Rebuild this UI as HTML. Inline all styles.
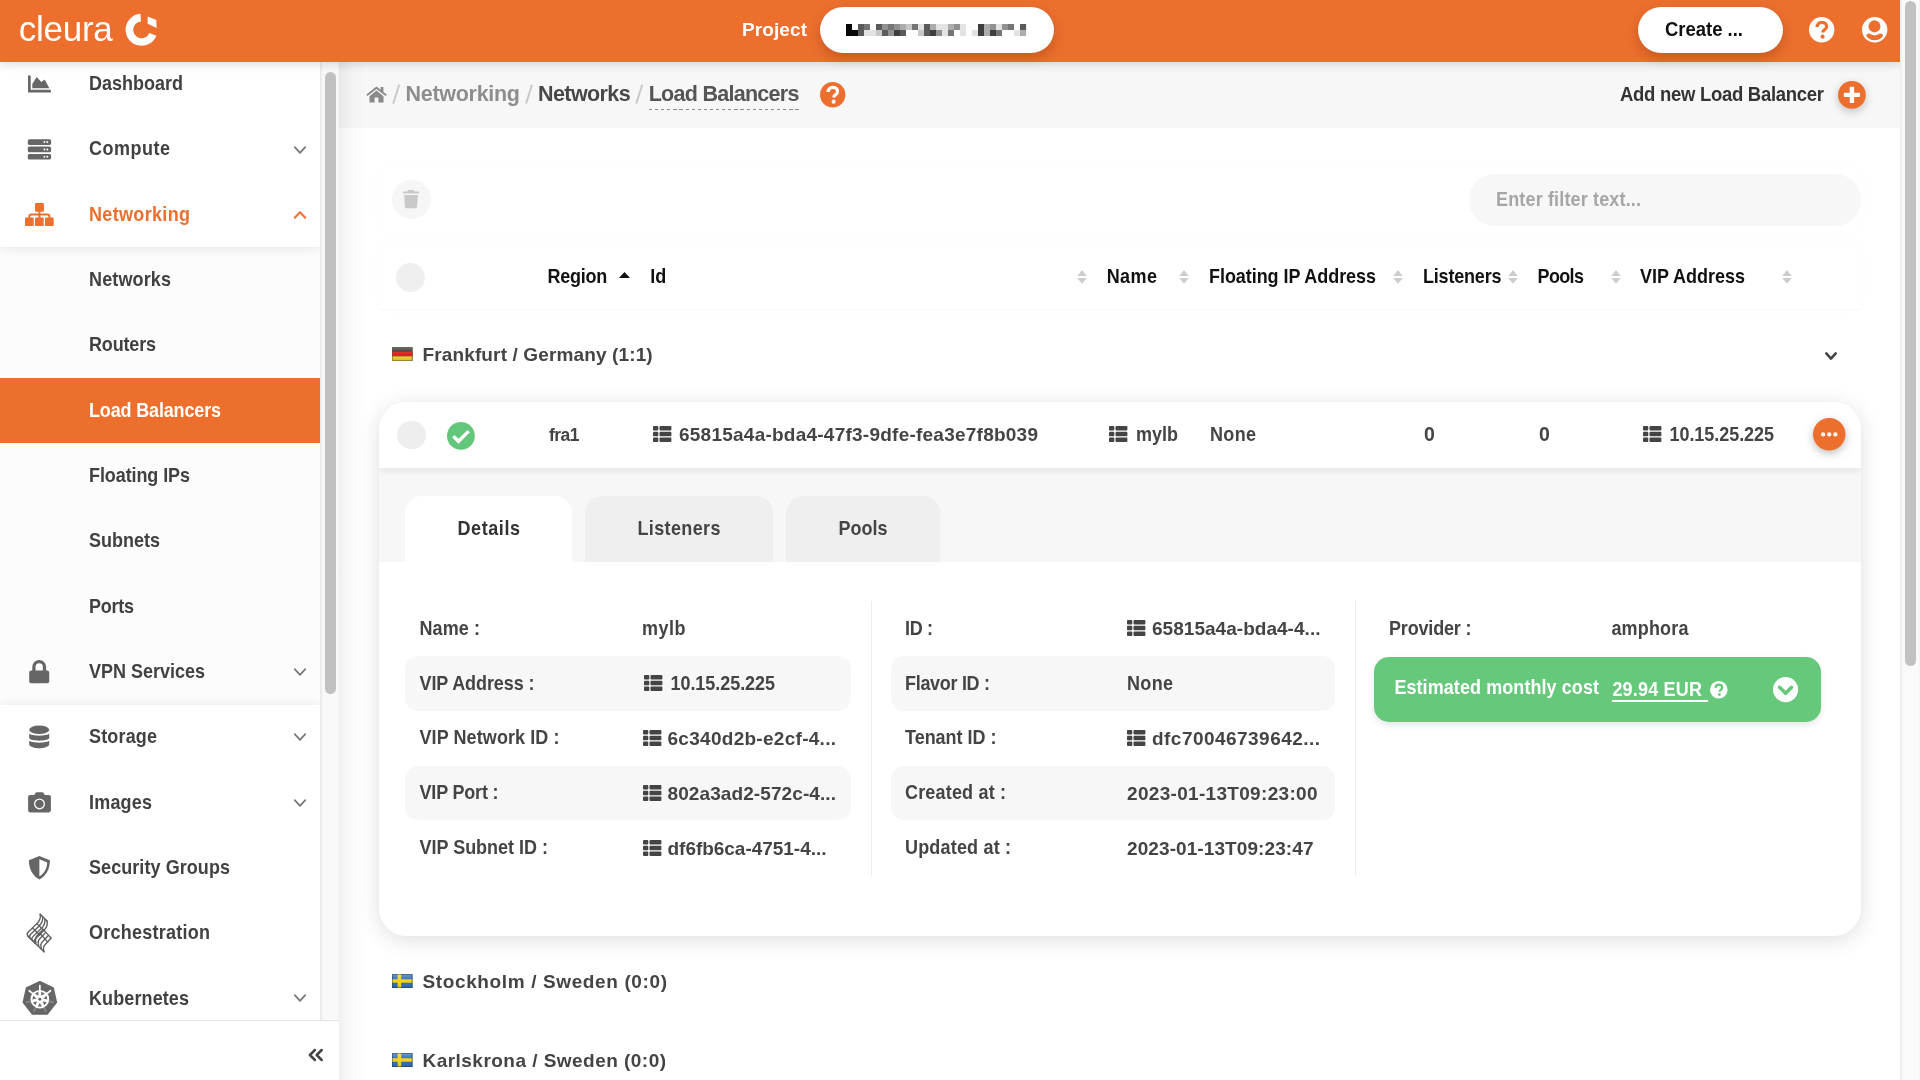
<!DOCTYPE html>
<html lang="en">
<head>
<meta charset="utf-8">
<title>Cleura - Load Balancers</title>
<style>
*{box-sizing:border-box;margin:0;padding:0}
html,body{width:1920px;height:1080px;overflow:hidden;background:#fff}
body{font-family:"Liberation Sans",sans-serif;color:#444;position:relative;font-weight:bold}
.t{position:absolute;white-space:nowrap;line-height:1}
svg{position:absolute;overflow:visible}
.a{position:absolute}
#hdr{position:absolute;left:0;top:0;width:1900px;height:62px;background:#ec6f2e;box-shadow:0 2px 10px rgba(0,0,0,.15);z-index:20}
.pill{position:absolute;top:7px;height:46px;border-radius:23px;background:#fff;box-shadow:0 5px 12px rgba(110,40,0,.30)}
#psb{position:absolute;left:1900px;top:0;width:20px;height:1080px;background:linear-gradient(90deg,#e9e9e9 0,#f3f3f3 1.5px,#fafafa 3.5px,#fafafa 18.5px,#f1f1f1 20px);z-index:30}
#psb i{position:absolute;left:5.1px;top:1px;width:11px;height:665px;border-radius:6px;background:#c1c1c1}
#side{position:absolute;left:0;top:62px;width:320px;height:958px;background:#fcfcfc;overflow:hidden;z-index:5}
#sidetop{position:absolute;left:0;top:-10px;width:320px;height:195px;background:#fff;box-shadow:0 3px 9px rgba(0,0,0,.07)}
#sidebot{position:absolute;left:0;top:642.7px;width:320px;height:330px;background:#fff;box-shadow:0 -3px 8px rgba(0,0,0,.05)}
#sideact{position:absolute;left:0;top:316px;width:320px;height:65px;background:#ec6f2e}
#ssb{position:absolute;left:320px;top:62px;width:19px;height:958px;background:linear-gradient(90deg,#e4e4e4 0,#f1f1f1 1.5px,#f9f9f9 3.5px,#fafafa 17.5px,#f0f0f0 19px);z-index:6}
#ssb i{position:absolute;left:5.3px;top:10px;width:10.4px;height:622.2px;border-radius:6px;background:#c1c1c1}
#sfoot{position:absolute;left:0;top:1020px;width:339px;height:60px;background:#fff;border-top:1px solid #e4e4e4;z-index:7}
#main{position:absolute;left:0;top:0;width:1900px;height:1080px;z-index:1;overflow:hidden}
#mshadow{position:absolute;left:339px;top:62px;width:26px;height:1018px;background:linear-gradient(90deg,rgba(0,0,0,.06),rgba(0,0,0,.018) 45%,rgba(0,0,0,0));z-index:9;pointer-events:none}
#bc{position:absolute;left:339px;top:62px;width:1561px;height:65.5px;background:#f7f7f7}
.circ{position:absolute;border-radius:50%}
.t,svg{will-change:auto}
#main,#side,#hdr,#sfoot{will-change:transform}
</style>
</head>
<body>
<div id="main"><div id="bc"></div>
<svg style="left:366.3px;top:85.6px;" width="21" height="16.6" viewBox="0 0 21 16.6"><path d="M10.5 0.4 L0.3 8.6 L1.5 10.1 L10.5 2.9 L19.5 10.1 L20.7 8.6 L17.4 5.9 L17.4 0.9 L14.6 0.9 L14.6 3.7 Z" fill="#8a8a8a"/><path d="M10.5 4.6 L3.5 10.3 L3.5 16.5 L8.6 16.5 L8.6 11.6 L12.4 11.6 L12.4 16.5 L17.5 16.5 L17.5 10.3 Z" fill="#8a8a8a"/></svg>
<svg style="left:0px;top:0px;" width="1" height="1" viewBox="0 0 1 1"><line x1="393.2" y1="103.6" x2="399.2" y2="84.8" stroke="#c8c8c8" stroke-width="1.9"/></svg>
<svg style="left:0px;top:0px;" width="1" height="1" viewBox="0 0 1 1"><line x1="526" y1="103.6" x2="532" y2="84.8" stroke="#c8c8c8" stroke-width="1.9"/></svg>
<svg style="left:0px;top:0px;" width="1" height="1" viewBox="0 0 1 1"><line x1="636.2" y1="103.6" x2="642.2" y2="84.8" stroke="#c8c8c8" stroke-width="1.9"/></svg>
<span class="t" id="t19" style="left:405.5px;top:84px;font-size:21.5px;color:#8e8e8e;letter-spacing:-0.286px;">Networking</span>
<span class="t" id="t20" style="left:538px;top:84px;font-size:21.5px;color:#484848;letter-spacing:-0.585px;">Networks</span>
<span class="t" id="t21" style="left:648.7px;top:84px;font-size:21.5px;color:#555;letter-spacing:-0.725px;">Load Balancers</span>
<div class="a" style="left:648.5px;top:109px;width:151px;height:1.4px;background:repeating-linear-gradient(90deg,#8c8c8c 0,#8c8c8c 3.2px,transparent 3.2px,transparent 6.1px)"></div>
<svg style="left:819.7px;top:82.2px;" width="25.4" height="25.4" viewBox="0 0 25.4 25.4"><g transform="scale(0.976923)"><circle cx="13" cy="13" r="13" fill="#ec6f2e"/><path d="M8.3 10.3 C8.3 7.2 10.4 5.5 13.2 5.5 C16 5.5 18 7.2 18 9.7 C18 11.8 16.7 12.7 15.5 13.5 C14.5 14.2 14.2 14.7 14.2 15.9" fill="none" stroke="#fff" stroke-width="3.3" stroke-linecap="butt"/><circle cx="13.9" cy="20.1" r="2.1" fill="#fff"/></g></svg>
<span class="t" id="t22" style="left:1620px;top:86px;font-size:18.5px;color:#333;letter-spacing:-0.286px;transform:scaleY(1.085);transform-origin:0 15px;">Add new Load Balancer</span>
<svg style="left:1838.3px;top:81.4px;filter:drop-shadow(0 3px 4px rgba(0,0,0,.22));" width="27.8" height="27.8" viewBox="0 0 27.8 27.8"><circle cx="13.9" cy="13.9" r="13.9" fill="#ec6f2e"/><rect x="5.8" y="11.7" width="16.2" height="4.4" rx="0.8" fill="#fff"/><rect x="11.7" y="5.8" width="4.4" height="16.2" rx="0.8" fill="#fff"/></svg>
<div class="a" style="left:379px;top:167px;width:1482px;height:65px;background:#fff;box-shadow:0 0 14px rgba(0,0,0,.014)"></div>
<div class="a" style="left:379px;top:245px;width:1482px;height:64px;background:#fff;box-shadow:0 0 14px rgba(0,0,0,.014)"></div>
<div class="circ" style="left:392px;top:180.3px;width:38.8px;height:38.8px;background:#f6f6f6"></div>
<svg style="left:403.4px;top:190px;" width="16" height="18.3" viewBox="0 0 16 18.3"><path d="M0 1.6 L4.6 1.6 L5.3 0.3 C5.4 0.1 5.6 0 5.8 0 L10.2 0 C10.4 0 10.6 0.1 10.7 0.3 L11.4 1.6 L16 1.6 L16 3.6 L0 3.6 Z" fill="#c9c9c9"/><path d="M1.1 5 L14.9 5 L14.1 16.8 C14 17.7 13.3 18.3 12.5 18.3 L3.5 18.3 C2.7 18.3 2 17.7 1.9 16.8 Z" fill="#c9c9c9"/></svg>
<div class="a" style="left:1469px;top:174px;width:392px;height:51.5px;border-radius:26px;background:#f7f7f7"></div>
<span class="t" id="t23" style="left:1496px;top:191px;font-size:18px;color:#a6a6a6;letter-spacing:0.156px;transform:scaleY(1.085);transform-origin:0 15px;">Enter filter text...</span>
<div class="a" style="left:379px;top:309px;width:1482px;height:1px;background:#f8f8f8"></div>
<div class="circ" style="left:396px;top:262.8px;width:29px;height:29px;background:#efefef"></div>
<span class="t" id="t24" style="left:547.5px;top:268px;font-size:18px;color:#111;letter-spacing:-0.240px;transform:scaleY(1.085);transform-origin:0 15px;">Region</span>
<svg style="left:619px;top:272.3px;" width="11" height="6" viewBox="0 0 11 6"><polygon points="0,6 5.5,0 11,6" fill="#111"/></svg>
<span class="t" id="t25" style="left:650.3px;top:268px;font-size:18px;color:#111;transform:scaleY(1.085);transform-origin:0 15px;">Id</span>
<span class="t" id="t26" style="left:1106.7px;top:268px;font-size:18px;color:#111;letter-spacing:0.423px;transform:scaleY(1.085);transform-origin:0 15px;">Name</span>
<span class="t" id="t27" style="left:1209px;top:268px;font-size:18px;color:#111;letter-spacing:-0.057px;transform:scaleY(1.085);transform-origin:0 15px;">Floating IP Address</span>
<span class="t" id="t28" style="left:1423px;top:268px;font-size:18px;color:#111;letter-spacing:-0.193px;transform:scaleY(1.085);transform-origin:0 15px;">Listeners</span>
<span class="t" id="t29" style="left:1537.5px;top:268px;font-size:18px;color:#111;letter-spacing:-0.629px;transform:scaleY(1.085);transform-origin:0 15px;">Pools</span>
<span class="t" id="t30" style="left:1640px;top:268px;font-size:18px;color:#111;letter-spacing:-0.005px;transform:scaleY(1.085);transform-origin:0 15px;">VIP Address</span>
<svg style="left:1081.5px;top:0px;" width="1" height="1" viewBox="0 0 1 1"><polygon points="-4.8,276 0,270 4.8,276" fill="#cdcdcd"/><polygon points="-4.8,277.9 0,283.7 4.8,277.9" fill="#cdcdcd"/></svg>
<svg style="left:1184px;top:0px;" width="1" height="1" viewBox="0 0 1 1"><polygon points="-4.8,276 0,270 4.8,276" fill="#cdcdcd"/><polygon points="-4.8,277.9 0,283.7 4.8,277.9" fill="#cdcdcd"/></svg>
<svg style="left:1398px;top:0px;" width="1" height="1" viewBox="0 0 1 1"><polygon points="-4.8,276 0,270 4.8,276" fill="#cdcdcd"/><polygon points="-4.8,277.9 0,283.7 4.8,277.9" fill="#cdcdcd"/></svg>
<svg style="left:1513px;top:0px;" width="1" height="1" viewBox="0 0 1 1"><polygon points="-4.8,276 0,270 4.8,276" fill="#cdcdcd"/><polygon points="-4.8,277.9 0,283.7 4.8,277.9" fill="#cdcdcd"/></svg>
<svg style="left:1615.5px;top:0px;" width="1" height="1" viewBox="0 0 1 1"><polygon points="-4.8,276 0,270 4.8,276" fill="#cdcdcd"/><polygon points="-4.8,277.9 0,283.7 4.8,277.9" fill="#cdcdcd"/></svg>
<svg style="left:1787px;top:0px;" width="1" height="1" viewBox="0 0 1 1"><polygon points="-4.8,276 0,270 4.8,276" fill="#cdcdcd"/><polygon points="-4.8,277.9 0,283.7 4.8,277.9" fill="#cdcdcd"/></svg>
<svg style="left:392.2px;top:347px;" width="20.6" height="14" viewBox="0 0 20.6 14"><defs><linearGradient id="gde" x1="0" y1="0" x2="0" y2="1"><stop offset="0" stop-color="#fff" stop-opacity=".35"/><stop offset=".5" stop-color="#fff" stop-opacity="0"/><stop offset="1" stop-color="#000" stop-opacity=".12"/></linearGradient></defs><rect x="0" y="0" width="20.6" height="14" fill="#2b2b2b"/><rect x="0" y="4.7" width="20.6" height="4.7" fill="#dd1f1f"/><rect x="0" y="9.3" width="20.6" height="4.7" fill="#f3cf2f"/><rect x="0" y="0" width="20.6" height="14" fill="url(#gde)"/><rect x="0.5" y="0.5" width="19.6" height="13" fill="none" stroke="#6b5a3a" stroke-opacity=".55" stroke-width="1"/></svg>
<span class="t" id="t31" style="left:422.5px;top:345px;font-size:19px;color:#444;letter-spacing:0.133px;">Frankfurt / Germany (1:1)</span>
<svg style="left:1830.5px;top:355.7px;" width="1" height="1" viewBox="0 0 1 1"><polyline points="-4.7,-2.6 0,2.6 4.7,-2.6" fill="none" stroke="#444" stroke-width="2.6" stroke-linecap="round" stroke-linejoin="round"/></svg>
<svg style="left:392.2px;top:974.3px;" width="20.6" height="14" viewBox="0 0 20.6 14"><defs><linearGradient id="gse1" x1="0" y1="0" x2="0" y2="1"><stop offset="0" stop-color="#fff" stop-opacity=".3"/><stop offset=".5" stop-color="#fff" stop-opacity="0"/><stop offset="1" stop-color="#000" stop-opacity=".12"/></linearGradient></defs><rect x="0" y="0" width="20.6" height="14" fill="#2d6bb5"/><rect x="5.6" y="0" width="3.6" height="14" fill="#f7d117"/><rect x="0" y="5.3" width="20.6" height="3.4" fill="#f7d117"/><rect x="0" y="0" width="20.6" height="14" fill="url(#gse1)"/><rect x="0.5" y="0.5" width="19.6" height="13" fill="none" stroke="#234" stroke-opacity=".4" stroke-width="1"/></svg>
<span class="t" id="t32" style="left:422.5px;top:972px;font-size:19px;color:#444;letter-spacing:0.624px;">Stockholm / Sweden (0:0)</span>
<svg style="left:392.2px;top:1052.7px;" width="20.6" height="14" viewBox="0 0 20.6 14"><defs><linearGradient id="gse2" x1="0" y1="0" x2="0" y2="1"><stop offset="0" stop-color="#fff" stop-opacity=".3"/><stop offset=".5" stop-color="#fff" stop-opacity="0"/><stop offset="1" stop-color="#000" stop-opacity=".12"/></linearGradient></defs><rect x="0" y="0" width="20.6" height="14" fill="#2d6bb5"/><rect x="5.6" y="0" width="3.6" height="14" fill="#f7d117"/><rect x="0" y="5.3" width="20.6" height="3.4" fill="#f7d117"/><rect x="0" y="0" width="20.6" height="14" fill="url(#gse2)"/><rect x="0.5" y="0.5" width="19.6" height="13" fill="none" stroke="#234" stroke-opacity=".4" stroke-width="1"/></svg>
<span class="t" id="t33" style="left:422.5px;top:1051px;font-size:19px;color:#444;letter-spacing:0.467px;">Karlskrona / Sweden (0:0)</span>
<div class="a" style="left:379px;top:402px;width:1482px;height:534px;border-radius:27px;background:#fff;box-shadow:0 4px 22px rgba(0,0,0,.13),0 0 3px rgba(0,0,0,.04);overflow:hidden"><div class="a" style="left:0;top:65px;width:1482px;height:94.6px;background:#f7f7f7"></div><div class="a" style="left:0;top:0;width:1482px;height:65.5px;background:#fff;box-shadow:0 3px 7px rgba(0,0,0,.07)"></div><div class="a" style="left:26px;top:94px;width:167.3px;height:66px;background:#fff;border-radius:17px 17px 0 0"></div><div class="a" style="left:206px;top:94px;width:188.3px;height:65.6px;background:#efefef;border-radius:17px 17px 0 0"></div><div class="a" style="left:407px;top:94px;width:154px;height:65.6px;background:#efefef;border-radius:17px 17px 0 0"></div></div>
<div class="circ" style="left:397.2px;top:420.5px;width:28.8px;height:28.8px;background:#eee"></div>
<svg style="left:447.2px;top:421.7px;" width="27.8" height="27.8" viewBox="0 0 27.8 27.8"><circle cx="13.9" cy="13.9" r="13.9" fill="#62c77a"/><polyline points="6.3,14.2 11.5,19.3 21.7,9.1" fill="none" stroke="#fff" stroke-width="3.4" stroke-linecap="butt" stroke-linejoin="miter"/></svg>
<span class="t" id="t34" style="left:549px;top:427px;font-size:17.5px;color:#444;letter-spacing:-0.536px;transform:scaleY(1.085);transform-origin:0 14px;">fra1</span>
<svg style="left:652.7px;top:426px;" width="18.4" height="16" viewBox="0 0 18.4 16"><rect x="0" y="0" width="5.3" height="4.4" rx="0.9" fill="#444"/><rect x="6.5" y="0" width="11.9" height="4.4" rx="0.9" fill="#444"/><rect x="0" y="5.8" width="5.3" height="4.4" rx="0.9" fill="#444"/><rect x="6.5" y="5.8" width="11.9" height="4.4" rx="0.9" fill="#444"/><rect x="0" y="11.6" width="5.3" height="4.4" rx="0.9" fill="#444"/><rect x="6.5" y="11.6" width="11.9" height="4.4" rx="0.9" fill="#444"/></svg>
<span class="t" id="t35" style="left:679px;top:425px;font-size:19px;color:#444;letter-spacing:0.238px;">65815a4a-bda4-47f3-9dfe-fea3e7f8b039</span>
<svg style="left:1109px;top:426px;" width="18.4" height="16" viewBox="0 0 18.4 16"><rect x="0" y="0" width="5.3" height="4.4" rx="0.9" fill="#444"/><rect x="6.5" y="0" width="11.9" height="4.4" rx="0.9" fill="#444"/><rect x="0" y="5.8" width="5.3" height="4.4" rx="0.9" fill="#444"/><rect x="6.5" y="5.8" width="11.9" height="4.4" rx="0.9" fill="#444"/><rect x="0" y="11.6" width="5.3" height="4.4" rx="0.9" fill="#444"/><rect x="6.5" y="11.6" width="11.9" height="4.4" rx="0.9" fill="#444"/></svg>
<span class="t" id="t36" style="left:1136px;top:426px;font-size:18px;color:#444;letter-spacing:-0.005px;transform:scaleY(1.085);transform-origin:0 15px;">mylb</span>
<span class="t" id="t37" style="left:1210px;top:426px;font-size:18px;color:#444;letter-spacing:0.333px;transform:scaleY(1.085);transform-origin:0 15px;">None</span>
<span class="t" id="t38" style="left:1424px;top:425px;font-size:19.5px;color:#444;">0</span>
<span class="t" id="t39" style="left:1539px;top:425px;font-size:19.5px;color:#444;">0</span>
<svg style="left:1643px;top:426px;" width="18.4" height="16" viewBox="0 0 18.4 16"><rect x="0" y="0" width="5.3" height="4.4" rx="0.9" fill="#444"/><rect x="6.5" y="0" width="11.9" height="4.4" rx="0.9" fill="#444"/><rect x="0" y="5.8" width="5.3" height="4.4" rx="0.9" fill="#444"/><rect x="6.5" y="5.8" width="11.9" height="4.4" rx="0.9" fill="#444"/><rect x="0" y="11.6" width="5.3" height="4.4" rx="0.9" fill="#444"/><rect x="6.5" y="11.6" width="11.9" height="4.4" rx="0.9" fill="#444"/></svg>
<span class="t" id="t40" style="left:1669.5px;top:426px;font-size:18px;color:#444;letter-spacing:-0.055px;transform:scaleY(1.085);transform-origin:0 15px;">10.15.25.225</span>
<svg style="left:1812.8px;top:418.2px;filter:drop-shadow(0 3px 4px rgba(0,0,0,.25));" width="32.5" height="32.5" viewBox="0 0 32.5 32.5"><circle cx="16.25" cy="16.25" r="16.25" fill="#ec6f2e"/><circle cx="10.15" cy="16.4" r="2.15" fill="#fff"/><circle cx="16.25" cy="16.4" r="2.15" fill="#fff"/><circle cx="22.35" cy="16.4" r="2.15" fill="#fff"/></svg>
<span class="t" id="t41" style="left:457.5px;top:520px;font-size:18px;color:#333;letter-spacing:0.578px;transform:scaleY(1.085);transform-origin:0 15px;">Details</span>
<span class="t" id="t42" style="left:637.5px;top:520px;font-size:18px;color:#444;letter-spacing:0.369px;transform:scaleY(1.085);transform-origin:0 15px;">Listeners</span>
<span class="t" id="t43" style="left:838.5px;top:520px;font-size:18px;color:#444;letter-spacing:-0.004px;transform:scaleY(1.085);transform-origin:0 15px;">Pools</span>
<div class="a" style="left:405px;top:656.3px;width:446px;height:54.3px;border-radius:13px;background:#f7f7f7"></div>
<div class="a" style="left:405px;top:766.1px;width:446px;height:54.3px;border-radius:13px;background:#f7f7f7"></div>
<div class="a" style="left:891px;top:656.3px;width:444px;height:54.3px;border-radius:13px;background:#f7f7f7"></div>
<div class="a" style="left:891px;top:766.1px;width:444px;height:54.3px;border-radius:13px;background:#f7f7f7"></div>
<div class="a" style="left:871px;top:601px;width:1px;height:275px;background:#ececec"></div>
<div class="a" style="left:1355px;top:601px;width:1px;height:275px;background:#ececec"></div>
<span class="t" id="t44" style="left:419.5px;top:620px;font-size:18px;color:#444;letter-spacing:0.094px;transform:scaleY(1.085);transform-origin:0 15px;">Name :</span>
<span class="t" id="t45" style="left:642px;top:620px;font-size:18px;color:#444;letter-spacing:0.495px;transform:scaleY(1.085);transform-origin:0 15px;">mylb</span>
<span class="t" id="t46" style="left:419.5px;top:675px;font-size:18px;color:#444;letter-spacing:-0.087px;transform:scaleY(1.085);transform-origin:0 15px;">VIP Address :</span>
<svg style="left:644px;top:675.18px;" width="18.4" height="16" viewBox="0 0 18.4 16"><rect x="0" y="0" width="5.3" height="4.4" rx="0.9" fill="#444"/><rect x="6.5" y="0" width="11.9" height="4.4" rx="0.9" fill="#444"/><rect x="0" y="5.8" width="5.3" height="4.4" rx="0.9" fill="#444"/><rect x="6.5" y="5.8" width="11.9" height="4.4" rx="0.9" fill="#444"/><rect x="0" y="11.6" width="5.3" height="4.4" rx="0.9" fill="#444"/><rect x="6.5" y="11.6" width="11.9" height="4.4" rx="0.9" fill="#444"/></svg>
<span class="t" id="t47" style="left:670.5px;top:675px;font-size:18px;color:#444;letter-spacing:-0.055px;transform:scaleY(1.085);transform-origin:0 15px;">10.15.25.225</span>
<span class="t" id="t48" style="left:419.5px;top:729px;font-size:18px;color:#444;letter-spacing:0.086px;transform:scaleY(1.085);transform-origin:0 15px;">VIP Network ID :</span>
<svg style="left:642.5px;top:730.01px;" width="18.4" height="16" viewBox="0 0 18.4 16"><rect x="0" y="0" width="5.3" height="4.4" rx="0.9" fill="#444"/><rect x="6.5" y="0" width="11.9" height="4.4" rx="0.9" fill="#444"/><rect x="0" y="5.8" width="5.3" height="4.4" rx="0.9" fill="#444"/><rect x="6.5" y="5.8" width="11.9" height="4.4" rx="0.9" fill="#444"/><rect x="0" y="11.6" width="5.3" height="4.4" rx="0.9" fill="#444"/><rect x="6.5" y="11.6" width="11.9" height="4.4" rx="0.9" fill="#444"/></svg>
<span class="t" id="t49" style="left:667.5px;top:729px;font-size:19px;color:#444;letter-spacing:0.282px;">6c340d2b-e2cf-4...</span>
<span class="t" id="t50" style="left:419.5px;top:784px;font-size:18px;color:#444;letter-spacing:-0.188px;transform:scaleY(1.085);transform-origin:0 15px;">VIP Port :</span>
<svg style="left:642.5px;top:784.84px;" width="18.4" height="16" viewBox="0 0 18.4 16"><rect x="0" y="0" width="5.3" height="4.4" rx="0.9" fill="#444"/><rect x="6.5" y="0" width="11.9" height="4.4" rx="0.9" fill="#444"/><rect x="0" y="5.8" width="5.3" height="4.4" rx="0.9" fill="#444"/><rect x="6.5" y="5.8" width="11.9" height="4.4" rx="0.9" fill="#444"/><rect x="0" y="11.6" width="5.3" height="4.4" rx="0.9" fill="#444"/><rect x="6.5" y="11.6" width="11.9" height="4.4" rx="0.9" fill="#444"/></svg>
<span class="t" id="t51" style="left:667.5px;top:784px;font-size:19px;color:#444;letter-spacing:0.094px;">802a3ad2-572c-4...</span>
<span class="t" id="t52" style="left:419.5px;top:839px;font-size:18px;color:#444;letter-spacing:-0.013px;transform:scaleY(1.085);transform-origin:0 15px;">VIP Subnet ID :</span>
<svg style="left:642.5px;top:839.67px;" width="18.4" height="16" viewBox="0 0 18.4 16"><rect x="0" y="0" width="5.3" height="4.4" rx="0.9" fill="#444"/><rect x="6.5" y="0" width="11.9" height="4.4" rx="0.9" fill="#444"/><rect x="0" y="5.8" width="5.3" height="4.4" rx="0.9" fill="#444"/><rect x="6.5" y="5.8" width="11.9" height="4.4" rx="0.9" fill="#444"/><rect x="0" y="11.6" width="5.3" height="4.4" rx="0.9" fill="#444"/><rect x="6.5" y="11.6" width="11.9" height="4.4" rx="0.9" fill="#444"/></svg>
<span class="t" id="t53" style="left:667.5px;top:839px;font-size:19px;color:#444;letter-spacing:-0.028px;">df6fb6ca-4751-4...</span>
<span class="t" id="t54" style="left:905px;top:620px;font-size:18px;color:#444;letter-spacing:-0.333px;transform:scaleY(1.085);transform-origin:0 15px;">ID :</span>
<svg style="left:1127px;top:620.35px;" width="18.4" height="16" viewBox="0 0 18.4 16"><rect x="0" y="0" width="5.3" height="4.4" rx="0.9" fill="#444"/><rect x="6.5" y="0" width="11.9" height="4.4" rx="0.9" fill="#444"/><rect x="0" y="5.8" width="5.3" height="4.4" rx="0.9" fill="#444"/><rect x="6.5" y="5.8" width="11.9" height="4.4" rx="0.9" fill="#444"/><rect x="0" y="11.6" width="5.3" height="4.4" rx="0.9" fill="#444"/><rect x="6.5" y="11.6" width="11.9" height="4.4" rx="0.9" fill="#444"/></svg>
<span class="t" id="t55" style="left:1152px;top:619px;font-size:19px;color:#444;letter-spacing:0.032px;">65815a4a-bda4-4...</span>
<span class="t" id="t56" style="left:905px;top:675px;font-size:18px;color:#444;letter-spacing:-0.302px;transform:scaleY(1.085);transform-origin:0 15px;">Flavor ID :</span>
<span class="t" id="t57" style="left:1127px;top:675px;font-size:18px;color:#444;letter-spacing:0.333px;transform:scaleY(1.085);transform-origin:0 15px;">None</span>
<span class="t" id="t58" style="left:905px;top:729px;font-size:18px;color:#444;letter-spacing:-0.017px;transform:scaleY(1.085);transform-origin:0 15px;">Tenant ID :</span>
<svg style="left:1127px;top:730.01px;" width="18.4" height="16" viewBox="0 0 18.4 16"><rect x="0" y="0" width="5.3" height="4.4" rx="0.9" fill="#444"/><rect x="6.5" y="0" width="11.9" height="4.4" rx="0.9" fill="#444"/><rect x="0" y="5.8" width="5.3" height="4.4" rx="0.9" fill="#444"/><rect x="6.5" y="5.8" width="11.9" height="4.4" rx="0.9" fill="#444"/><rect x="0" y="11.6" width="5.3" height="4.4" rx="0.9" fill="#444"/><rect x="6.5" y="11.6" width="11.9" height="4.4" rx="0.9" fill="#444"/></svg>
<span class="t" id="t59" style="left:1152px;top:729px;font-size:19px;color:#444;letter-spacing:0.464px;">dfc70046739642...</span>
<span class="t" id="t60" style="left:905px;top:784px;font-size:18px;color:#444;letter-spacing:0.179px;transform:scaleY(1.085);transform-origin:0 15px;">Created at :</span>
<span class="t" id="t61" style="left:1127px;top:784px;font-size:19px;color:#444;letter-spacing:0.313px;">2023-01-13T09:23:00</span>
<span class="t" id="t62" style="left:905px;top:839px;font-size:18px;color:#444;letter-spacing:0.180px;transform:scaleY(1.085);transform-origin:0 15px;">Updated at :</span>
<span class="t" id="t63" style="left:1127px;top:839px;font-size:19px;color:#444;letter-spacing:0.091px;">2023-01-13T09:23:47</span>
<span class="t" id="t64" style="left:1389px;top:620px;font-size:18px;color:#444;letter-spacing:-0.170px;transform:scaleY(1.085);transform-origin:0 15px;">Provider :</span>
<span class="t" id="t65" style="left:1611.4px;top:620px;font-size:18px;color:#444;letter-spacing:0.178px;transform:scaleY(1.085);transform-origin:0 15px;">amphora</span>
<div class="a" style="left:1374px;top:657px;width:447px;height:65.2px;border-radius:15px;background:#66c87b;box-shadow:0 3px 6px rgba(0,0,0,.10)"></div>
<span class="t" id="t66" style="left:1394.4px;top:679px;font-size:18px;color:#fff;letter-spacing:0.074px;transform:scaleY(1.085);transform-origin:0 15px;">Estimated monthly cost</span>
<span class="t" id="t67" style="left:1612.4px;top:681px;font-size:18px;color:#fff;letter-spacing:0.192px;transform:scaleY(1.085);transform-origin:0 15px;">29.94 EUR</span>
<div class="a" style="left:1612.4px;top:700.2px;width:95.6px;height:1.7px;background:#fff"></div>
<svg style="left:1710.4px;top:680.6px;" width="17.6" height="17.6" viewBox="0 0 17.6 17.6"><g transform="scale(0.676923)"><circle cx="13" cy="13" r="13" fill="#fff"/><path d="M8.3 10.3 C8.3 7.2 10.4 5.5 13.2 5.5 C16 5.5 18 7.2 18 9.7 C18 11.8 16.7 12.7 15.5 13.5 C14.5 14.2 14.2 14.7 14.2 15.9" fill="none" stroke="#66c87b" stroke-width="3.3" stroke-linecap="butt"/><circle cx="13.9" cy="20.1" r="2.1" fill="#66c87b"/></g></svg>
<svg style="left:1772.6px;top:676.8px;" width="25.2" height="25.2" viewBox="0 0 25.2 25.2"><circle cx="12.6" cy="12.6" r="12.6" fill="#fff"/><polyline points="6.6,10.3 12.6,16.3 18.6,10.3" fill="none" stroke="#66c87b" stroke-width="3.6" stroke-linecap="round" stroke-linejoin="round"/></svg>
<div id="mshadow"></div></div>
<div id="side"><div id="sidetop"></div><div id="sideact"></div><div id="sidebot"></div>
<div class="a" style="left:0;top:-62px;width:320px;height:1080px">
<span class="t" id="t4" style="left:89px;top:75px;font-size:18px;color:#414141;letter-spacing:-0.004px;transform:scaleY(1.13);transform-origin:0 15px;">Dashboard</span>
<span class="t" id="t5" style="left:89px;top:140px;font-size:18px;color:#414141;letter-spacing:0.500px;transform:scaleY(1.13);transform-origin:0 15px;">Compute</span>
<span class="t" id="t6" style="left:89px;top:206px;font-size:18px;color:#ec6f2e;letter-spacing:0.332px;transform:scaleY(1.13);transform-origin:0 15px;">Networking</span>
<span class="t" id="t7" style="left:89px;top:271px;font-size:18px;color:#414141;letter-spacing:0.138px;transform:scaleY(1.13);transform-origin:0 15px;">Networks</span>
<span class="t" id="t8" style="left:89px;top:336px;font-size:18px;color:#414141;letter-spacing:-0.169px;transform:scaleY(1.13);transform-origin:0 15px;">Routers</span>
<span class="t" id="t9" style="left:89px;top:402px;font-size:18px;color:#fff;letter-spacing:-0.159px;transform:scaleY(1.13);transform-origin:0 15px;">Load Balancers</span>
<span class="t" id="t10" style="left:89px;top:467px;font-size:18px;color:#414141;letter-spacing:-0.092px;transform:scaleY(1.13);transform-origin:0 15px;">Floating IPs</span>
<span class="t" id="t11" style="left:89px;top:532px;font-size:18px;color:#414141;letter-spacing:-0.003px;transform:scaleY(1.13);transform-origin:0 15px;">Subnets</span>
<span class="t" id="t12" style="left:89px;top:598px;font-size:18px;color:#414141;letter-spacing:-0.254px;transform:scaleY(1.13);transform-origin:0 15px;">Ports</span>
<span class="t" id="t13" style="left:89px;top:663px;font-size:18px;color:#414141;letter-spacing:-0.007px;transform:scaleY(1.13);transform-origin:0 15px;">VPN Services</span>
<span class="t" id="t14" style="left:89px;top:728px;font-size:18px;color:#414141;letter-spacing:0.161px;transform:scaleY(1.13);transform-origin:0 15px;">Storage</span>
<span class="t" id="t15" style="left:89px;top:794px;font-size:18px;color:#414141;letter-spacing:0.191px;transform:scaleY(1.13);transform-origin:0 15px;">Images</span>
<span class="t" id="t16" style="left:89px;top:859px;font-size:18px;color:#414141;letter-spacing:0.068px;transform:scaleY(1.13);transform-origin:0 15px;">Security Groups</span>
<span class="t" id="t17" style="left:89px;top:924px;font-size:18px;color:#414141;letter-spacing:0.247px;transform:scaleY(1.13);transform-origin:0 15px;">Orchestration</span>
<span class="t" id="t18" style="left:89px;top:990px;font-size:18px;color:#414141;letter-spacing:0.108px;transform:scaleY(1.13);transform-origin:0 15px;">Kubernetes</span>
<svg style="left:0px;top:0px;" width="1" height="1" viewBox="0 0 1 1"><path d="M28 75.5 L30.7 75.5 L30.7 89.8 L50.8 89.8 L50.8 92.5 L28 92.5 Z" fill="#666"/><path d="M32.3 88.2 L32.3 84 L36.7 76.9 L41.3 82 L44.7 79.5 L49.3 88.2 Z" fill="#666"/></svg>
<svg style="left:0px;top:0px;" width="1" height="1" viewBox="0 0 1 1"><rect x="27.8" y="139.2" width="23.3" height="5.7" rx="1.6" fill="#666"/><circle cx="44.4" cy="142.05" r="0.95" fill="#fff"/><circle cx="47.3" cy="142.05" r="0.95" fill="#fff"/><rect x="27.8" y="146.6" width="23.3" height="5.7" rx="1.6" fill="#666"/><circle cx="44.4" cy="149.45" r="0.95" fill="#fff"/><circle cx="47.3" cy="149.45" r="0.95" fill="#fff"/><rect x="27.8" y="153.9" width="23.3" height="5.7" rx="1.6" fill="#666"/><circle cx="44.4" cy="156.75" r="0.95" fill="#fff"/><circle cx="47.3" cy="156.75" r="0.95" fill="#fff"/></svg>
<svg style="left:0px;top:0px;" width="1" height="1" viewBox="0 0 1 1"><rect x="35" y="203.1" width="8.9" height="8.7" rx="1.2" fill="#ec6f2e"/><rect x="25" y="217.4" width="8.7" height="8.7" rx="1.2" fill="#ec6f2e"/><rect x="35" y="217.4" width="8.7" height="8.7" rx="1.2" fill="#ec6f2e"/><rect x="45" y="217.4" width="8.7" height="8.7" rx="1.2" fill="#ec6f2e"/><path d="M39.4 211 L39.4 218 M29.4 218 L29.4 216 Q29.4 214.4 31 214.4 L47.8 214.4 Q49.4 214.4 49.4 216 L49.4 218" fill="none" stroke="#ec6f2e" stroke-width="2"/></svg>
<svg style="left:0px;top:0px;" width="1" height="1" viewBox="0 0 1 1"><rect x="29.2" y="670.5" width="20" height="12.7" rx="2" fill="#666"/><path d="M33.9 671 L33.9 667 A5.3 5.3 0 0 1 44.5 667 L44.5 671" fill="none" stroke="#666" stroke-width="3.3"/></svg>
<svg style="left:0px;top:0px;" width="1" height="1" viewBox="0 0 1 1"><ellipse cx="39.2" cy="729.8" rx="10" ry="4.3" fill="#666"/><path d="M29.2 733.6 C31 736.4 47.4 736.4 49.2 733.6 L49.2 738.3 C47.4 741.5 31 741.5 29.2 738.3 Z" fill="#666"/><path d="M29.2 740.6 C31 743.4 47.4 743.4 49.2 740.6 L49.2 744.5 C47.4 749.5 31 749.5 29.2 744.5 Z" fill="#666"/></svg>
<svg style="left:0px;top:0px;" width="1" height="1" viewBox="0 0 1 1"><path d="M30.2 795 L34.2 795 L35.4 792.9 Q35.8 792.2 36.6 792.2 L42.4 792.2 Q43.2 792.2 43.6 792.9 L44.8 795 L48.8 795 Q50.9 795 50.9 797.1 L50.9 810.3 Q50.9 812.4 48.8 812.4 L30.2 812.4 Q28.1 812.4 28.1 810.3 L28.1 797.1 Q28.1 795 30.2 795 Z" fill="#666"/><circle cx="39.5" cy="803.9" r="4.85" fill="none" stroke="#fff" stroke-width="1.3"/></svg>
<svg style="left:0px;top:0px;" width="1" height="1" viewBox="0 0 1 1"><path d="M39.4 856 L49.9 860.3 C49.9 869 46.3 876 39.4 879.4 C32.5 876 28.9 869 28.9 860.3 Z" fill="#666"/><path d="M39.4 859.3 L47.2 862.4 C47 868.4 44.3 873.4 39.4 876.2 Z" fill="#fff"/></svg>
<svg style="left:0px;top:0px;" width="1" height="1" viewBox="0 0 1 1"><g transform="translate(20 905) scale(0.05102)" fill="none" stroke="#5e5e5e" stroke-width="27" stroke-linecap="round"><path d="M395 180 C413 265 390 305 335 360 L160 535 C133 563 137 590 160 617"/><path d="M440 225 C458 310 435 350 380 405 L205 580 C178 608 182 635 205 662"/><path d="M485 270 C503 355 480 395 425 450 L250 625 C223 653 227 680 250 707"/><path d="M530 315 C548 400 525 440 470 495 L295 670 C268 698 272 725 295 752"/><path d="M395 180 L530 315"/><path d="M330 365 L470 500"/><path d="M245 450 L385 590"/><path d="M160 617 L470 915"/><path d="M452 478 L327 613 C300 643 300 693 315 740"/><path d="M504 537 L379 672 C352 702 352 752 367 799"/><path d="M556 596 L431 731 C404 761 404 811 419 858"/><path d="M607 653 L482 788 C455 818 455 868 470 915"/><path d="M452 478 L585 620 Q607 640 607 653"/><path d="M385 550 L540 722"/></g></svg>
<svg style="left:0px;top:0px;" width="1" height="1" viewBox="0 0 1 1"><polygon points="39.85,981.60 53.14,988.00 56.42,1002.38 47.23,1013.92 32.47,1013.92 23.28,1002.38 26.56,988.00" fill="#666" stroke="#666" stroke-width="1.5" stroke-linejoin="round"/><circle cx="39.85" cy="999.2" r="9.3" fill="#fff"/><line x1="39.85" y1="990.70" x2="39.85" y2="985.60" stroke="#fff" stroke-opacity="1" stroke-width="1.7" stroke-linecap="round"/><polygon points="41.46,995.87 41.18,991.82 44.79,993.56" fill="#666"/><line x1="46.50" y1="993.90" x2="50.48" y2="990.72" stroke="#fff" stroke-opacity="1" stroke-width="1.7" stroke-linecap="round"/><polygon points="43.46,998.38 46.45,995.64 47.34,999.54" fill="#666"/><line x1="48.14" y1="1001.09" x2="53.11" y2="1002.23" stroke="#fff" stroke-opacity="0.22" stroke-width="1.7" stroke-linecap="round"/><polygon points="42.74,1001.51 46.75,1002.14 44.25,1005.27" fill="#666"/><line x1="43.54" y1="1006.86" x2="45.75" y2="1011.45" stroke="#fff" stroke-opacity="0.22" stroke-width="1.7" stroke-linecap="round"/><polygon points="39.85,1002.90 41.85,1006.43 37.85,1006.43" fill="#666"/><line x1="36.16" y1="1006.86" x2="33.95" y2="1011.45" stroke="#fff" stroke-opacity="0.22" stroke-width="1.7" stroke-linecap="round"/><polygon points="36.96,1001.51 35.45,1005.27 32.95,1002.14" fill="#666"/><line x1="31.56" y1="1001.09" x2="26.59" y2="1002.23" stroke="#fff" stroke-opacity="0.22" stroke-width="1.7" stroke-linecap="round"/><polygon points="36.24,998.38 32.36,999.54 33.25,995.64" fill="#666"/><line x1="33.20" y1="993.90" x2="29.22" y2="990.72" stroke="#fff" stroke-opacity="1" stroke-width="1.7" stroke-linecap="round"/><polygon points="38.24,995.87 34.91,993.56 38.52,991.82" fill="#666"/><circle cx="39.85" cy="999.2" r="1.45" fill="#666"/></svg>
<svg style="left:300px;top:149.5px;" width="1" height="1" viewBox="0 0 1 1"><polyline points="-5.25,-2.8 0,2.8 5.25,-2.8" fill="none" stroke="#777" stroke-width="1.7" stroke-linecap="round" stroke-linejoin="round"/></svg>
<svg style="left:300px;top:671.5px;" width="1" height="1" viewBox="0 0 1 1"><polyline points="-5.25,-2.8 0,2.8 5.25,-2.8" fill="none" stroke="#777" stroke-width="1.7" stroke-linecap="round" stroke-linejoin="round"/></svg>
<svg style="left:300px;top:737px;" width="1" height="1" viewBox="0 0 1 1"><polyline points="-5.25,-2.8 0,2.8 5.25,-2.8" fill="none" stroke="#777" stroke-width="1.7" stroke-linecap="round" stroke-linejoin="round"/></svg>
<svg style="left:300px;top:802.5px;" width="1" height="1" viewBox="0 0 1 1"><polyline points="-5.25,-2.8 0,2.8 5.25,-2.8" fill="none" stroke="#777" stroke-width="1.7" stroke-linecap="round" stroke-linejoin="round"/></svg>
<svg style="left:300px;top:998px;" width="1" height="1" viewBox="0 0 1 1"><polyline points="-5.25,-2.8 0,2.8 5.25,-2.8" fill="none" stroke="#777" stroke-width="1.7" stroke-linecap="round" stroke-linejoin="round"/></svg>
<svg style="left:300px;top:214.5px;" width="1" height="1" viewBox="0 0 1 1"><polyline points="-5.25,2.8 0,-2.8 5.25,2.8" fill="none" stroke="#ec6f2e" stroke-width="2" stroke-linecap="round" stroke-linejoin="round"/></svg>
</div></div>
<div id="ssb"><i></i></div>
<div id="sfoot"><svg style="left:316px;top:34px;" width="1" height="1" viewBox="0 0 1 1"><polyline points="-1.1,-5 -6.1,0 -1.1,5" fill="none" stroke="#444" stroke-width="2.5" stroke-linecap="round" stroke-linejoin="round"/><polyline points="5.7,-5 0.7,0 5.7,5" fill="none" stroke="#444" stroke-width="2.5" stroke-linecap="round" stroke-linejoin="round"/></svg></div>
<div id="hdr">
<span class="t" id="t1" style="left:18.8px;top:11px;font-size:35px;color:#fff;font-weight:normal;letter-spacing:-0.266px;">cleura</span>
<svg style="left:0px;top:0px;" width="1" height="1" viewBox="0 0 1 1"><path d="M140.75 17.63 A12.2 12.2 0 1 0 152.91 34.37" fill="none" stroke="#fff" stroke-width="7.6"/><polygon points="147.6,16.6 156.3,20 156.6,27.9 147.6,23.7" fill="#fff"/></svg>
<span class="t" id="t2" style="left:742px;top:20px;font-size:19px;color:#fff;letter-spacing:0.096px;">Project</span>
<div class="pill" style="left:820.3px;width:233.4px"></div>
<svg style="left:846px;top:23.9px;" width="180" height="12" viewBox="0 0 180 12"><rect x="0" y="0" width="6.1" height="6" fill="#080808"/><rect x="0" y="6" width="6.1" height="6" fill="#080808"/><rect x="6" y="0" width="6.1" height="6" fill="#fefefe"/><rect x="6" y="6" width="6.1" height="6" fill="#080808"/><rect x="12" y="0" width="6.1" height="6" fill="#5a5a5a"/><rect x="12" y="6" width="6.1" height="6" fill="#5a5a5a"/><rect x="18" y="0" width="6.1" height="6" fill="#757575"/><rect x="18" y="6" width="6.1" height="6" fill="#e3e3e3"/><rect x="24" y="0" width="6.1" height="6" fill="#fefefe"/><rect x="24" y="6" width="6.1" height="6" fill="#e3e3e3"/><rect x="30" y="0" width="6.1" height="6" fill="#5a5a5a"/><rect x="30" y="6" width="6.1" height="6" fill="#c7c7c7"/><rect x="36" y="0" width="6.1" height="6" fill="#919191"/><rect x="36" y="6" width="6.1" height="6" fill="#5a5a5a"/><rect x="42" y="0" width="6.1" height="6" fill="#757575"/><rect x="42" y="6" width="6.1" height="6" fill="#919191"/><rect x="48" y="0" width="6.1" height="6" fill="#919191"/><rect x="48" y="6" width="6.1" height="6" fill="#3e3e3e"/><rect x="54" y="0" width="6.1" height="6" fill="#acacac"/><rect x="54" y="6" width="6.1" height="6" fill="#5a5a5a"/><rect x="60" y="0" width="6.1" height="6" fill="#c7c7c7"/><rect x="60" y="6" width="6.1" height="6" fill="#fefefe"/><rect x="66" y="0" width="6.1" height="6" fill="#757575"/><rect x="66" y="6" width="6.1" height="6" fill="#fefefe"/><rect x="72" y="0" width="6.1" height="6" fill="#e3e3e3"/><rect x="72" y="6" width="6.1" height="6" fill="#c7c7c7"/><rect x="78" y="0" width="6.1" height="6" fill="#5a5a5a"/><rect x="78" y="6" width="6.1" height="6" fill="#5a5a5a"/><rect x="84" y="0" width="6.1" height="6" fill="#acacac"/><rect x="84" y="6" width="6.1" height="6" fill="#3e3e3e"/><rect x="90" y="0" width="6.1" height="6" fill="#e3e3e3"/><rect x="90" y="6" width="6.1" height="6" fill="#919191"/><rect x="96" y="0" width="6.1" height="6" fill="#e3e3e3"/><rect x="96" y="6" width="6.1" height="6" fill="#e3e3e3"/><rect x="102" y="0" width="6.1" height="6" fill="#acacac"/><rect x="102" y="6" width="6.1" height="6" fill="#757575"/><rect x="108" y="0" width="6.1" height="6" fill="#919191"/><rect x="108" y="6" width="6.1" height="6" fill="#fefefe"/><rect x="114" y="0" width="6.1" height="6" fill="#e3e3e3"/><rect x="114" y="6" width="6.1" height="6" fill="#e3e3e3"/><rect x="120" y="0" width="6.1" height="6" fill="#fefefe"/><rect x="120" y="6" width="6.1" height="6" fill="#fefefe"/><rect x="126" y="0" width="6.1" height="6" fill="#fefefe"/><rect x="126" y="6" width="6.1" height="6" fill="#e3e3e3"/><rect x="132" y="0" width="6.1" height="6" fill="#3e3e3e"/><rect x="132" y="6" width="6.1" height="6" fill="#3e3e3e"/><rect x="138" y="0" width="6.1" height="6" fill="#acacac"/><rect x="138" y="6" width="6.1" height="6" fill="#acacac"/><rect x="144" y="0" width="6.1" height="6" fill="#919191"/><rect x="144" y="6" width="6.1" height="6" fill="#3e3e3e"/><rect x="150" y="0" width="6.1" height="6" fill="#e3e3e3"/><rect x="150" y="6" width="6.1" height="6" fill="#757575"/><rect x="156" y="0" width="6.1" height="6" fill="#919191"/><rect x="156" y="6" width="6.1" height="6" fill="#fefefe"/><rect x="162" y="0" width="6.1" height="6" fill="#757575"/><rect x="162" y="6" width="6.1" height="6" fill="#fefefe"/><rect x="168" y="0" width="6.1" height="6" fill="#fefefe"/><rect x="168" y="6" width="6.1" height="6" fill="#e3e3e3"/><rect x="174" y="0" width="6.1" height="6" fill="#5a5a5a"/><rect x="174" y="6" width="6.1" height="6" fill="#acacac"/></svg>
<div class="pill" style="left:1638.3px;width:144.7px"></div>
<span class="t" id="t3" style="left:1665px;top:21px;font-size:18.5px;color:#111;letter-spacing:-0.017px;transform:scaleY(1.085);transform-origin:0 15px;">Create ...</span>
<svg style="left:1809.1px;top:17.3px;" width="25.4" height="25.4" viewBox="0 0 25.4 25.4"><g transform="scale(0.976923)"><circle cx="13" cy="13" r="13" fill="#fff"/><path d="M8.3 10.3 C8.3 7.2 10.4 5.5 13.2 5.5 C16 5.5 18 7.2 18 9.7 C18 11.8 16.7 12.7 15.5 13.5 C14.5 14.2 14.2 14.7 14.2 15.9" fill="none" stroke="#ec6f2e" stroke-width="3.3" stroke-linecap="butt"/><circle cx="13.9" cy="20.1" r="2.1" fill="#ec6f2e"/></g></svg>
<svg style="left:1861.6px;top:17.3px;" width="25.4" height="25.4" viewBox="0 0 25.4 25.4"><g transform="scale(0.976923)"><defs><clipPath id="uc"><circle cx="13" cy="13" r="11.6"/></clipPath></defs><circle cx="13" cy="13" r="13" fill="#fff"/><circle cx="12.8" cy="9.6" r="6.15" fill="#ec6f2e"/><path d="M4.2 19 C5 17.3 6.3 16.8 7.6 16.8 C9.3 18.1 11 18.6 12.9 18.6 C14.8 18.6 16.5 18.1 18.2 16.8 C19.5 16.8 20.8 17.3 21.6 19 C20 22 17 23.9 12.9 23.9 C8.8 23.9 5.8 22 4.2 19 Z" fill="#ec6f2e" clip-path="url(#uc)"/></g></svg>
</div>
<div id="psb"><i></i></div>
</body>
</html>
